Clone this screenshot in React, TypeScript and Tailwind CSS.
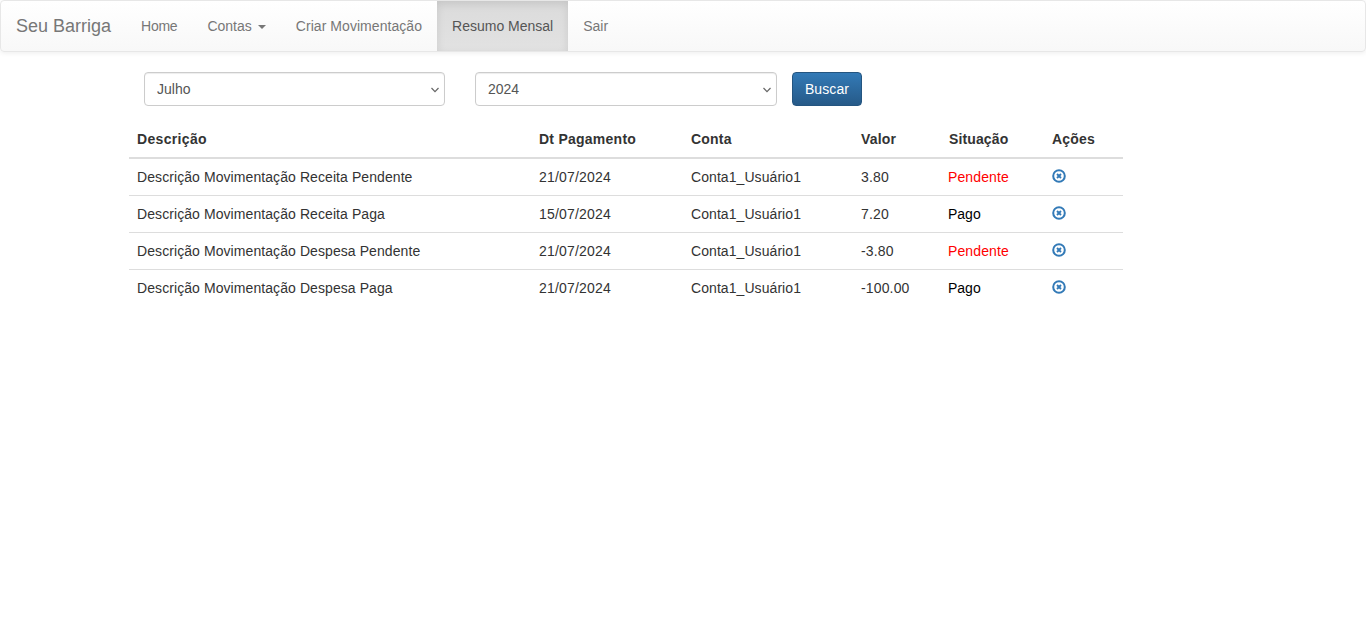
function Chevron() {
  return (
    <svg width="10" height="6" viewBox="0 0 10 6" className="pointer-events-none absolute right-[5px] top-[15px]">
      <path d="M1.5 1 5 4.6 8.5 1" fill="none" stroke="#666" strokeWidth="1.2" />
    </svg>
  );
}

export default function App() {
  const nav = ["Home", "Contas", "Criar Movimentação", "Resumo Mensal", "Sair"];
  const rows = [
    ["Descrição Movimentação Receita Pendente", "21/07/2024", "Conta1_Usuário1", "3.80", "Pendente"],
    ["Descrição Movimentação Receita Paga", "15/07/2024", "Conta1_Usuário1", "7.20", "Pago"],
    ["Descrição Movimentação Despesa Pendente", "21/07/2024", "Conta1_Usuário1", "-3.80", "Pendente"],
    ["Descrição Movimentação Despesa Paga", "21/07/2024", "Conta1_Usuário1", "-100.00", "Pago"],
  ];
  const selectClass =
    "h-[34px] w-full appearance-none rounded-[4px] border border-[#ccc] bg-white px-[12px] text-[14px] text-[#555] shadow-[inset_0_1px_1px_rgba(0,0,0,0.075)]";
  return (
    <div className="min-h-[635px] bg-white font-['Liberation_Sans',Arial,sans-serif] text-[14px] leading-[20px] text-[#333]">
      <nav className="flex h-[52px] items-stretch rounded-[4px] border border-[#e7e7e7] bg-gradient-to-b from-white to-[#f8f8f8] shadow-[inset_0_1px_0_rgba(255,255,255,0.15),0_1px_5px_rgba(0,0,0,0.075)]">
        <a className="px-[15px] pt-[15px] text-[18px] text-[#777]">Seu Barriga</a>
        {nav.map((n) => {
          const active = n === "Resumo Mensal";
          return (
            <a
              key={n}
              className={
                active
                  ? "bg-gradient-to-b from-[#dbdbdb] to-[#e2e2e2] px-[15px] pt-[15px] text-[#555] shadow-[inset_0_3px_9px_rgba(0,0,0,0.1)]"
                  : n === "Home"
                    ? "px-[15px] pt-[15px] tracking-[-0.25px] text-[#777]"
                    : n === "Criar Movimentação"
                      ? "px-[15px] pt-[15px] tracking-[0.055px] text-[#777]"
                      : "px-[15px] pt-[15px] text-[#777]"
              }
            >
              {n}
              {n === "Contas" && (
                <span className="ml-[6px] inline-block border-x-[4px] border-t-[4px] border-x-transparent border-t-[#777] align-middle" />
              )}
            </a>
          );
        })}
      </nav>
      <main className="ml-[129px] w-[994px]">
        <form className="flex items-center pl-[15px] pt-[20px]">
          <div className="relative w-[301px]">
            <select defaultValue="Julho" className={selectClass}>
              <option>Julho</option>
            </select>
            <Chevron />
          </div>
          <div className="relative ml-[30px] w-[302px]">
            <select defaultValue="2024" className={selectClass}>
              <option>2024</option>
            </select>
            <Chevron />
          </div>
          <button
            type="button"
            className="ml-[15px] h-[34px] w-[70px] rounded-[4px] border border-[#245580] bg-gradient-to-b from-[#337ab7] to-[#265a88] text-[14px] tracking-[0.1px] text-white"
          >
            Buscar
          </button>
        </form>
        <table className="mt-[15px] w-[994px] table-fixed border-collapse">
          <colgroup>
            <col className="w-[402px]" />
            <col className="w-[152px]" />
            <col className="w-[170px]" />
            <col className="w-[87px]" />
            <col className="w-[104px]" />
            <col className="w-[79px]" />
          </colgroup>
          <thead>
            <tr className="border-b-2 border-[#ddd]">
              <th className="p-[8px] text-left font-bold tracking-[0.33px]">Descrição</th>
              <th className="p-[8px] text-left font-bold tracking-[0.25px]">Dt Pagamento</th>
              <th className="p-[8px] text-left font-bold tracking-[0.2px]">Conta</th>
              <th className="p-[8px] text-left font-bold tracking-[0.2px]">Valor</th>
              <th className="py-[8px] pl-[9px] pr-[7px] text-left font-bold tracking-[0.12px]">Situação</th>
              <th className="p-[8px] text-left font-bold tracking-[0.2px]">Ações</th>
            </tr>
          </thead>
          <tbody>
            {rows.map((r, i) => (
              <tr key={i} className={i ? "border-t border-[#ddd]" : ""}>
                <td className="p-[8px] tracking-[0.08px]">{r[0]}</td>
                <td className="p-[8px] tracking-[0.2px]">{r[1]}</td>
                <td className="p-[8px] tracking-[0.07px]">{r[2]}</td>
                <td className="p-[8px] tracking-[0.15px]">{r[3]}</td>
                <td className={r[4] === "Pendente" ? "p-[8px] tracking-[0.12px] text-[#f00]" : "p-[8px] text-black"}>{r[4]}</td>
                <td className="p-[8px]">
                  <svg width="14" height="14" viewBox="0 0 14 14" className="block -translate-y-[1px]">
                    <circle cx="7" cy="7" r="5.8" fill="none" stroke="#337ab7" strokeWidth="2" />
                    <path d="M5 5 9 9M9 5 5 9" stroke="#337ab7" strokeWidth="1.9" />
                  </svg>
                </td>
              </tr>
            ))}
          </tbody>
        </table>
      </main>
    </div>
  );
}
